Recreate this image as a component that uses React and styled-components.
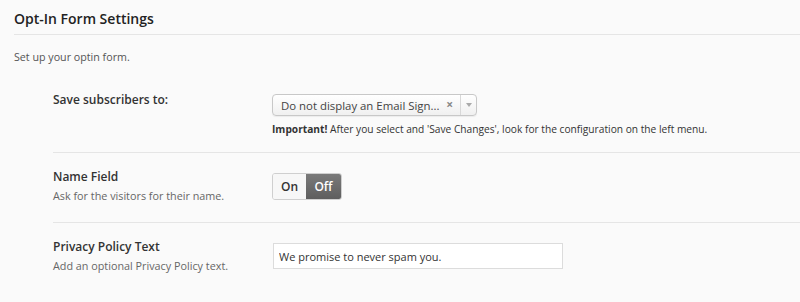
import React from "react";
import styled, { createGlobalStyle } from "styled-components";

const Global = createGlobalStyle`
  html, body {
    margin: 0;
    padding: 0;
    background: #fafafa;
  }
  body {
    font-family: "Open Sans", "Liberation Sans", sans-serif;
    color: #444;
  }
`;

const Page = styled.div`
  padding: 9px 0 0 14px;
`;

const Title = styled.h2`
  margin: 0;
  font-size: 14px;
  font-weight: 600;
  color: #222;
  line-height: 20px;
  padding-bottom: 5px;
  border-bottom: 1px solid #e5e5e5;
`;

const Intro = styled.p`
  margin: 14px 0 0;
  font-size: 10.7px;
  line-height: 16px;
  color: #555;
`;

const Rows = styled.div`
  margin: 9px 0 0 39px;
`;

const Row = styled.div`
  display: grid;
  grid-template-columns: 219px 1fr;
  padding: ${(p) => p.$pad || "15px 0 18px"};
  border-top: ${(p) => (p.$first ? "none" : "1px solid #e5e5e5")};
`;

const LabelCol = styled.div`
  padding-top: ${(p) => p.$offset || "0px"};
`;

const FieldCol = styled.div`
  padding-top: 5px;
`;

const Label = styled.div`
  font-size: 12px;
  font-weight: 600;
  color: #333;
  line-height: 18px;
`;

const Desc = styled.div`
  font-size: 10.8px;
  line-height: 16px;
  color: #666;
  margin-top: 2px;
`;

const Select = styled.div`
  width: 203px;
  height: 20px;
  border: 1px solid #c8c8c8;
  border-radius: 4px;
  background: linear-gradient(#ffffff, #f0f0f0);
  display: flex;
  align-items: center;
  box-shadow: 0 1px 1px rgba(0, 0, 0, 0.06);
`;

const SelectText = styled.span`
  flex: 1;
  padding-left: 8px;
  font-size: 11.4px;
  color: #444;
  white-space: nowrap;
  overflow: hidden;
`;

const Clear = styled.span`
  font-size: 12px;
  color: #888;
  font-weight: 700;
  padding: 0 7px 0 2px;
  line-height: 20px;
`;

const Arrow = styled.span`
  width: 15px;
  height: 20px;
  border-left: 1px solid #d8d8d8;
  display: flex;
  align-items: center;
  justify-content: center;
  &::after {
    content: "";
    border-left: 3px solid transparent;
    border-right: 3px solid transparent;
    border-top: 4px solid #aaa;
  }
`;

const Note = styled.div`
  margin-top: 5px;
  font-size: 10.2px;
  line-height: 16px;
  color: #333;
  b {
    font-weight: 700;
  }
`;

const Toggle = styled.div`
  display: inline-flex;
  height: 25px;
  border: 1px solid #cfcfcf;
  border-radius: 3px;
  overflow: hidden;
`;

const ToggleOpt = styled.span`
  display: flex;
  align-items: center;
  justify-content: center;
  width: ${(p) => p.$w}px;
  font-size: 12px;
  font-weight: 600;
  color: ${(p) => (p.$active ? "#fff" : "#333")};
  background: ${(p) =>
    p.$active ? "linear-gradient(#7a7a7a, #5e5e5e)" : "#f7f7f7"};
`;

const TextInput = styled.input`
  box-sizing: border-box;
  width: 290px;
  height: 26px;
  border: 1px solid #dcdcdc;
  background: #fff;
  padding: 0 5px;
  font-family: "Open Sans", "Liberation Sans", sans-serif;
  font-size: 11px;
  color: #333;
  outline: none;
  margin-left: 1px;
`;

export default function App() {
  return (
    <>
      <Global />
      <Page>
        <Title>Opt-In Form Settings</Title>
        <Intro>Set up your optin form.</Intro>
        <Rows>
          <Row $first $pad="15px 0 15px">
            <LabelCol $offset="2px">
              <Label>Save subscribers to:</Label>
            </LabelCol>
            <FieldCol>
              <Select>
                <SelectText>Do not display an Email Sign...</SelectText>
                <Clear>×</Clear>
                <Arrow />
              </Select>
              <Note>
                <b>Important!</b> After you select and 'Save Changes', look for
                the configuration on the left menu.
              </Note>
            </FieldCol>
          </Row>
          <Row>
            <LabelCol>
              <Label>Name Field</Label>
              <Desc>Ask for the visitors for their name.</Desc>
            </LabelCol>
            <FieldCol>
              <Toggle>
                <ToggleOpt $w={33}>On</ToggleOpt>
                <ToggleOpt $w={35} $active>
                  Off
                </ToggleOpt>
              </Toggle>
            </FieldCol>
          </Row>
          <Row>
            <LabelCol>
              <Label>Privacy Policy Text</Label>
              <Desc>Add an optional Privacy Policy text.</Desc>
            </LabelCol>
            <FieldCol>
              <TextInput defaultValue="We promise to never spam you." />
            </FieldCol>
          </Row>
        </Rows>
      </Page>
    </>
  );
}
